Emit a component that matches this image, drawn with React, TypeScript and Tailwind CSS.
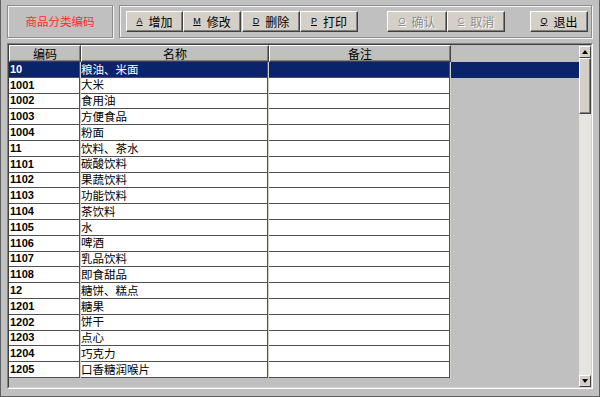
import React from 'react'

const rows: [string, string][] = [
  ['10', '粮油、米面'],
  ['1001', '大米'],
  ['1002', '食用油'],
  ['1003', '方便食品'],
  ['1004', '粉面'],
  ['11', '饮料、茶水'],
  ['1101', '碳酸饮料'],
  ['1102', '果蔬饮料'],
  ['1103', '功能饮料'],
  ['1104', '茶饮料'],
  ['1105', '水'],
  ['1106', '啤酒'],
  ['1107', '乳品饮料'],
  ['1108', '即食甜品'],
  ['12', '糖饼、糕点'],
  ['1201', '糖果'],
  ['1202', '饼干'],
  ['1203', '点心'],
  ['1204', '巧克力'],
  ['1205', '口香糖润喉片'],
]

const cjk = "font-['Noto_Sans_CJK_SC','Noto_Sans',sans-serif]"

function ToolButton({ hot, label, disabled, w }: { hot: string; label: string; disabled?: boolean; w: string }) {
  const tone = disabled ? 'text-[#8a8a8a] [text-shadow:1px_1px_0_#fff]' : 'text-black'
  return (
    <div
      className={`${w} h-[21px] flex items-center justify-center gap-[6px] bg-[#d4d0c8] border border-t-white border-l-white border-r-[#404040] border-b-[#404040] shadow-[inset_-1px_-1px_0_#808080] ${tone}`}
    >
      <span className="font-['Liberation_Sans',sans-serif] text-[9px] underline leading-none">{hot}</span>
      <span className={`${cjk} text-[12px] leading-none`}>{label}</span>
    </div>
  )
}

function ScrollArrow({ up }: { up?: boolean }) {
  return (
    <div className="w-[12px] h-[12px] flex items-center justify-center bg-[#d4d0c8] border border-t-white border-l-white border-r-[#404040] border-b-[#404040]">
      <svg width="6" height="4" viewBox="0 0 6 4">
        {up ? <path d="M3 0 L6 4 L0 4 Z" fill="#000" /> : <path d="M0 0 L6 0 L3 4 Z" fill="#000" />}
      </svg>
    </div>
  )
}

export default function App() {
  return (
    <div className="w-[600px] h-[397px] bg-[#c0c0c0] border-l border-r border-b border-[#606060] flex flex-col overflow-hidden">
      {/* top bar */}
      <div className="flex pt-[5px] pl-[6px] gap-[6px] h-[42px]">
        <div className="w-[106px] h-[33px] border border-[#8c8c8c] shadow-[inset_1px_1px_0_#f4f4f4,1px_1px_0_#f4f4f4] flex items-center justify-center">
          <span className={`${cjk} text-[11.5px] text-[#ff2a2a]`}>商品分类编码</span>
        </div>
        <div className="w-[473px] h-[33px] border border-[#8c8c8c] shadow-[inset_1px_1px_0_#f4f4f4,1px_1px_0_#f4f4f4] flex items-start pt-[5px] pl-[6px]">
          <ToolButton hot="A" label="增加" w="w-[57px]" />
          <ToolButton hot="M" label="修改" w="w-[58px]" />
          <ToolButton hot="D" label="删除" w="w-[58px] ml-px" />
          <ToolButton hot="P" label="打印" w="w-[58px]" />
          <ToolButton hot="O" label="确认" w="w-[60px] ml-[29px]" disabled />
          <ToolButton hot="C" label="取消" w="w-[58px]" disabled />
          <ToolButton hot="Q" label="退出" w="w-[58px] ml-[25px]" />
        </div>
      </div>

      {/* grid */}
      <div className="ml-[6px] mt-px w-[586px] h-[346px] border border-t-[#808080] border-l-[#808080] border-r-white border-b-white">
        <div className="w-full h-full border border-t-[#404040] border-l-[#404040] border-r-[#d4d0c8] border-b-[#d4d0c8] flex">
          <div className="flex-1 flex flex-col">
            {/* header */}
            <div className={`flex h-[17px] ${cjk} text-[12px] leading-none`}>
              {[
                ['编码', 'w-[72px]'],
                ['名称', 'w-[188px]'],
                ['备注', 'w-[182px]'],
              ].map(([t, w]) => (
                <div
                  key={t}
                  className={`${w} flex items-center justify-center bg-[#c0c0c0] border border-t-white border-l-white border-r-[#404040] border-b-[#404040] shadow-[inset_-1px_-1px_0_#808080]`}
                >
                  {t}
                </div>
              ))}
              <div className="flex-1" />
            </div>
            {/* rows */}
            {rows.map(([code, name], i) => {
              const sel = i === 0
              const cell = sel ? 'bg-[#0a246a] text-white' : 'bg-white text-black'
              return (
                <div key={code} className="flex h-[15.8px]">
                  <div className="flex bg-[#d4d0c8]">
                    <div className={`w-[71px] mr-px border-r border-b border-[#505050] pl-[1px] flex items-center font-['Liberation_Sans',sans-serif] font-bold text-[11px] leading-none ${cell}`}>
                      {code}
                    </div>
                    <div className={`w-[187px] mr-px border-r border-b border-[#505050] flex items-center ${cjk} text-[11.5px] leading-none ${cell}`}>
                      {name}
                    </div>
                    <div className={`w-[181px] mr-px border-r border-b border-[#505050] ${cell}`} />
                  </div>
                  <div className={`flex-1 ${sel ? 'bg-[#0a246a]' : ''}`} />
                </div>
              )
            })}
          </div>
          {/* scrollbar */}
          <div className="w-[12px] flex flex-col bg-[#e6e4e0] mt-px">
            <ScrollArrow up />
            <div className="h-[56px] bg-[#d4d0c8] border border-t-white border-l-white border-r-[#404040] border-b-[#404040] shadow-[inset_-1px_-1px_0_#808080]" />
            <div className="flex-1" />
            <ScrollArrow />
          </div>
        </div>
      </div>
    </div>
  )
}
